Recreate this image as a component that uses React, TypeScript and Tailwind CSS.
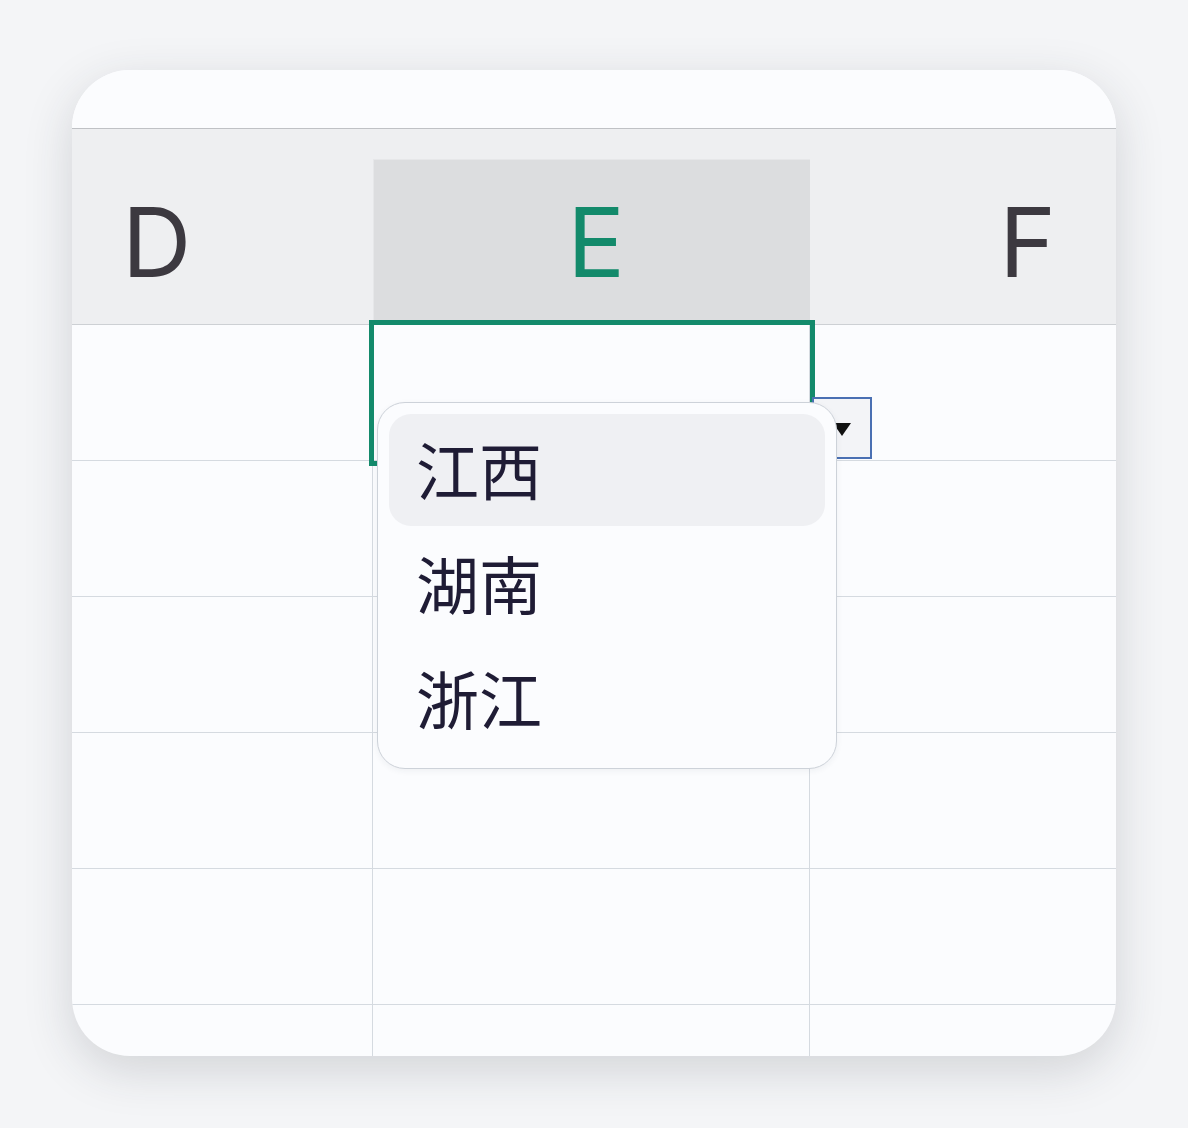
import React from "react";

const rows = [0, 1, 2, 3, 4];

export default function App() {
  return (
    <div className="min-h-screen w-[1188px] h-[1128px] bg-[#f4f5f7] pt-[70px] pl-[72px]">
      <div
        className="relative w-[1044px] h-[986px] rounded-[58px] overflow-hidden bg-[#fbfcfe] shadow-[0_14px_48px_rgba(40,45,60,0.17)]"
        style={{ fontFamily: '"Inter", "Noto Sans", "Noto Sans CJK SC", sans-serif' }}
      >
        {/* top strip */}
        <div className="h-[59px] border-b border-[#bfc1c5] bg-[#fbfcfe]" />
        {/* header row */}
        <div className="grid grid-cols-[301px_437px_306px] h-[196px] bg-[#eeeff1] border-b border-[#cdd0d4] pt-[30px]">
          <div className="flex items-center pl-[50px] text-[96px] leading-none text-[#3c3940] font-normal">
            D
          </div>
          <div className="flex items-center justify-center pl-[8px] bg-[#dcdddf] border-t border-l border-[#e6e7e9] text-[96px] leading-none text-[#138a6b] font-normal">
            E
          </div>
          <div className="flex items-center justify-end pr-[60px] text-[96px] leading-none text-[#3c3940] font-normal">
            F
          </div>
        </div>
        {/* body rows */}
        {rows.map((r) => (
          <div
            key={r}
            className="grid grid-cols-[301px_437px_306px] h-[136px] border-b border-[#d5dae0]"
          >
            <div className="border-r border-[#d5dae0]" />
            <div className="border-r border-[#d5dae0]" />
            <div />
          </div>
        ))}
        <div className="grid grid-cols-[301px_437px_306px] h-[60px]">
          <div className="border-r border-[#d5dae0]" />
          <div className="border-r border-[#d5dae0]" />
          <div />
        </div>

        {/* selected cell */}
        <div className="absolute left-[297px] top-[250px] w-[446px] h-[146px] border-[5px] border-[#138a6b]" />

        {/* dropdown arrow button */}
        <div className="absolute left-[740px] top-[327px] w-[60px] h-[62px] border-2 border-[#4a70b3] bg-[#f3f4f7] flex items-center justify-center">
          <svg width="18" height="13" viewBox="0 0 18 13" className="mt-[2px]">
            <path d="M0 0 H18 L9 13 Z" fill="#111" />
          </svg>
        </div>

        {/* dropdown list */}
        <div
          className="absolute left-[305px] top-[332px] w-[460px] h-[367px] rounded-[28px] border border-[#cdd2d9] bg-[#fbfcfe] p-[11px] flex flex-col shadow-[0_2px_6px_rgba(40,45,60,0.06)]"
          style={{ fontFamily: '"Noto Sans CJK SC", "Noto Sans", sans-serif' }}
        >
          <div className="h-[113px] rounded-[22px] bg-[#eff0f3] flex items-center pl-[27px] pb-[6px] text-[63px] leading-none text-[#1f1c35]">
            江西
          </div>
          <div className="h-[117px] flex items-center pl-[27px] pb-[6px] text-[63px] leading-none text-[#1f1c35]">
            湖南
          </div>
          <div className="h-[115px] flex items-center pl-[27px] pb-[6px] text-[63px] leading-none text-[#1f1c35]">
            浙江
          </div>
        </div>
      </div>
    </div>
  );
}
